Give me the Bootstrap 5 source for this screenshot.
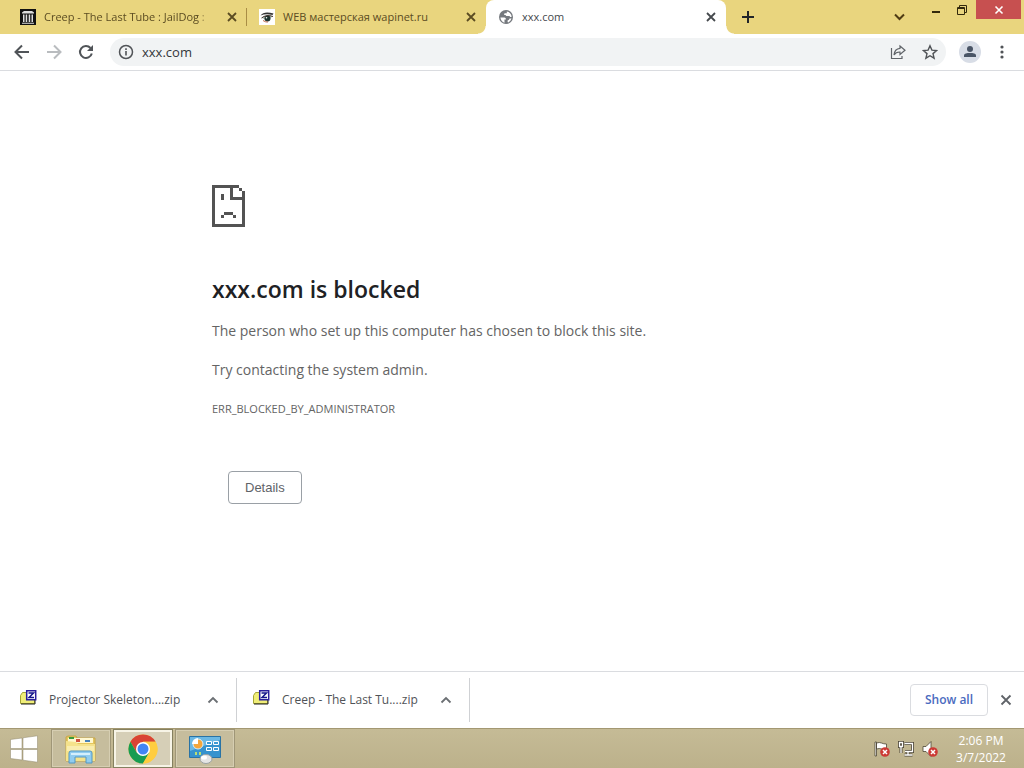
<!DOCTYPE html>
<html lang="en">
<head>
<meta charset="utf-8">
<meta name="viewport" content="width=device-width, initial-scale=1">
<title>xxx.com</title>
<link href="https://cdn.jsdelivr.net/npm/bootstrap@5.3.0/dist/css/bootstrap.min.css" rel="stylesheet">
<style>
body{font-family:"Open Sans","Noto Sans",sans-serif;font-size:12px;line-height:16px;color:#3c4043;background:#fff}
svg{display:block;flex:none}
button{font-family:inherit}
.plain{background:none;border:0;padding:0;color:inherit;display:flex;align-items:center;justify-content:center;flex:none}
.tabstrip{background:#e9d57e;height:34px;color:#5b4c22}
.tab{flex:0 1 239px;min-width:0;height:34px;padding:0 7px 0 12px}
.tab a{color:inherit;font-size:11px;min-width:0;overflow:hidden;white-space:nowrap;height:34px}
.tab .fade-end{-webkit-mask-image:linear-gradient(90deg,#000 96%,rgba(0,0,0,.4));mask-image:linear-gradient(90deg,#000 96%,rgba(0,0,0,.4))}
.tab.split{border-right:1px solid #a98d45;height:18px;padding-right:6px}
.tab.current{flex-basis:240px;background:#fff;color:#45494d;border-radius:8px 8px 0 0;position:relative}
.tab.current::before,.tab.current::after{content:"";position:absolute;bottom:0;width:8px;height:8px}
.tab.current::before{right:100%;background:radial-gradient(circle at 0 0,transparent 7px,#fff 8px)}
.tab.current::after{left:100%;background:radial-gradient(circle at 100% 0,transparent 7px,#fff 8px)}
.winbtn{width:26px;height:19px;color:#33290c}
.winclose{width:45px;background:#c75050;color:#fff;margin-right:3px}
.toolbar{height:37px;border-bottom:1px solid #dadce0;padding:0 17px 0 12px}
.navbtn{width:20px;height:20px;color:#505458}
.omni{background:#f1f3f4;border-radius:14px;height:28px;padding:0 8px;margin-left:14px}
.omni input{font-size:13px;line-height:20px;border:0;background:none;color:#33373b;outline:0;min-width:0;padding:0}
.avatar{width:22px;height:22px;border-radius:50%;background:#d8dde6;margin-left:13px}
.message{max-width:600px;width:100%;color:#646464;font-size:14px;line-height:24px;padding-top:114px}
.message h1{font-size:23px;line-height:28px;font-weight:600;color:#202124;margin:48px 0 16px}
.message p{margin:0 0 15px}
.message .code{font-size:11px}
.details{font:13px/20px "Liberation Sans",sans-serif;color:#5f6368;background:#fff;border:1px solid #9aa0a6;border-radius:4px;padding:6px 16px 5px;margin:35px 0 0 16px}
.shelf{border-top:1px solid #dadce0;height:57px;font-size:12px;color:#505357}
.dl{border-right:1px solid #cfd1d4;height:44px;width:233px;padding:0 15px 0 16px}
.dl a{color:inherit}
.dl:first-child{width:237px;padding-left:20px}
.showall{font-size:12px;font-weight:600;color:#4a6bc0;background:#fff;border:1px solid #dadce0;border-radius:4px;height:32px;width:78px}
.taskbar{height:40px;background:linear-gradient(#c5bb96,#bcb18b);border-top:1px solid #a39872}
.tasks{gap:2px}
.task{width:60px;height:39px;border:1px solid #9f9677;box-shadow:inset 0 0 0 1px #d6ceb2;background:#c6bd9d}
.task.on{border-color:#85805f;box-shadow:inset 0 0 0 2px #f7f4e6;background:#d6cfb7}
.start{width:51px;height:39px;padding-right:4px}
.clock{color:#fff;font-size:12px;line-height:17px;width:70px;margin-right:8px}
</style>
</head>
<body>
<div class="d-flex flex-column vh-100 overflow-hidden">
<header>
<div class="tabstrip d-flex align-items-center ps-2">
  <div class="tab split d-flex align-items-center">
    <a href="#" class="d-flex align-items-center gap-2 flex-grow-1 text-decoration-none">
      <svg width="16" height="16" viewBox="0 0 16 16"><path fill="#111" d="M0 0h16v16H0z"/><path fill="#ddd" d="M2 3.500L4 2h8l2 1.500V4.500H2zM3 5.500h1.500V13H3zM5.700 5.500h1.500V13H5.700zM8.700 5.500h1.500V13H8.700zM11.500 5.500H13V13h-1.500zM2 13.700h12v1H2z"/></svg>
      <span class="fade-end">Creep - The Last Tube : JailDog :</span></a>
    <button class="plain ms-1" aria-label="Close tab"><svg width="16" height="16" viewBox="0 0 16 16" stroke="currentColor" stroke-width="1.800"><path d="M4 4l8 8M12 4l-8 8"/></svg></button>
  </div>
  <div class="tab d-flex align-items-center">
    <a href="#" class="d-flex align-items-center gap-2 flex-grow-1 text-decoration-none">
      <svg width="16" height="16" viewBox="0 0 16 16"><path fill="#fff" d="M0 0h16v16H0z"/><path d="M1.500 6.500Q5 1.500 14.500 4.500l-1 1.500Q7 4.500 1.500 6.500z" fill="#333"/><path d="M3 9Q7 5 13.500 7.500Q9 13 3 9z" fill="#b9c6bd"/><circle cx="8.500" cy="9.500" r="3" fill="#1d332f"/><path d="M2.500 9q5-4 11.500-1.500" stroke="#3b2b24" fill="none"/><path d="M4 11.500q3 2 5 1.500" stroke="#bd6b4d" fill="none"/><circle cx="7.500" cy="8.700" r=".8" fill="#fff"/></svg>
      <span>WEB мастерская wapinet.ru</span></a>
    <button class="plain ms-1" aria-label="Close tab"><svg width="16" height="16" viewBox="0 0 16 16" stroke="currentColor" stroke-width="1.800"><path d="M4 4l8 8M12 4l-8 8"/></svg></button>
  </div>
  <div class="tab current d-flex align-items-center">
    <a href="#" class="d-flex align-items-center gap-2 flex-grow-1 text-decoration-none">
      <svg width="16" height="16" viewBox="0 0 16 16"><circle cx="8" cy="8" r="7" fill="#75797e"/><path fill="#fff" d="M2.400 8.500h4q1.600.2 1.600 2H6.500v3.200Q2.800 12.500 2.400 8.500zM8.800 2.500Q12 3 13.300 6L13.600 8h-1.400Q12 7 11 7H8.500Q7.700 7 7.700 6H6.200V4.800Q6.200 4.300 7 4.300h1.800zM13.500 9.500Q12.700 12.500 10 13.400q-.8-1-.2-2.200 1.400.2 1.700-1.700z"/></svg>
      <span>xxx.com</span></a>
    <button class="plain ms-1" aria-label="Close tab"><svg width="16" height="16" viewBox="0 0 16 16" stroke="currentColor" stroke-width="1.800"><path d="M4 4l8 8M12 4l-8 8"/></svg></button>
  </div>
  <button class="plain text-dark px-1 ms-2" aria-label="New tab"><svg width="20" height="16" viewBox="0 0 20 16" stroke="currentColor" stroke-width="2"><path d="M10 2v12M4 8h12"/></svg></button>
  <div class="d-flex ms-auto align-self-stretch">
    <button class="plain me-3" aria-label="Search tabs"><svg width="16" height="16" viewBox="0 0 16 16" fill="none" stroke="#4f3c14" stroke-width="2"><path d="M3 5.500l4.500 4.500L12 5.500"/></svg></button>
    <button class="plain winbtn" aria-label="Minimize"><svg width="10" height="10" viewBox="0 0 10 10"><path fill="currentColor" d="M0 6h8v2H0z"/></svg></button>
    <button class="plain winbtn" aria-label="Restore"><svg width="12" height="12" viewBox="0 0 12 12" fill="none" stroke="currentColor"><path d="M.5 3.500h7v7h-7zM0 4.500h8M2.500 3V1.500h7v7H8"/></svg></button>
    <button class="plain winbtn winclose" aria-label="Close"><svg width="10" height="10" viewBox="0 0 10 10" stroke="currentColor" stroke-width="1.600"><path d="M1.500 1.500l7 7M8.500 1.500l-7 7"/></svg></button>
  </div>
</div>
<div class="toolbar d-flex align-items-center">
  <div class="d-flex gap-2">
  <button class="plain navbtn me-1" aria-label="Back"><svg width="20" height="20" viewBox="0 0 20 20" fill="none" stroke="currentColor" stroke-width="2"><path d="M17 10H4M10 3.500L3.500 10l6.500 6.500"/></svg></button>
  <button class="plain navbtn me-1" aria-label="Forward"><svg width="20" height="20" viewBox="0 0 20 20" fill="none" stroke="#b9bcbf" stroke-width="2"><path d="M3 10h13M10 3.500l6.500 6.500-6.500 6.500"/></svg></button>
  <button class="plain navbtn" aria-label="Reload"><svg width="20" height="20" viewBox="0 0 20 20"><path fill="none" stroke="currentColor" stroke-width="2" d="M15.800 11.500A6 6 0 1 1 14.500 6"/><path fill="currentColor" d="M17 3v6h-6z"/></svg></button>
  </div>
  <div class="omni d-flex align-items-center flex-grow-1">
    <svg width="16" height="16" viewBox="0 0 16 16"><circle cx="8" cy="8" r="6.500" fill="none" stroke="#505357" stroke-width="1.500"/><path fill="#505357" d="M7.200 7h1.600v4.500H7.200zM7.200 4.300h1.600v1.600H7.200z"/></svg>
    <input class="flex-grow-1 ms-2" type="text" aria-label="Address" value="xxx.com">
    <button class="plain me-3" aria-label="Share"><svg width="16" height="16" viewBox="0 0 16 16" fill="none" stroke="#5f6368" stroke-width="1.200"><path d="M1.500 4v10.500H12V12M10 2l5 4.200-5 4.300V8Q6 7.800 4 11Q4.500 4.800 10 4.300z"/></svg></button>
    <button class="plain" aria-label="Bookmark"><svg width="16" height="16" viewBox="0 0 16 16" fill="none" stroke="#505357" stroke-width="1.400"><path d="M8 1.800l1.900 4.300 4.700.4-3.600 3.100 1.100 4.600L8 11.700l-4.100 2.500L5 9.600 1.400 6.500l4.700-.4z"/></svg></button>
  </div>
  <button class="plain avatar" aria-label="Profile"><svg width="14" height="14" viewBox="0 0 14 14" fill="#4a5566"><circle cx="7" cy="4" r="3"/><path d="M1 12v-1.500C1 8.500 4 8 7 8s6 .5 6 2.500V12z"/></svg></button>
  <button class="plain ms-3" aria-label="Menu"><svg width="10" height="16" viewBox="0 0 10 16" fill="#505357"><circle cx="5" cy="3" r="1.600"/><circle cx="5" cy="8" r="1.600"/><circle cx="5" cy="13" r="1.600"/></svg></button>
</div>
</header>
<main class="flex-grow-1 overflow-auto">
  <div class="message mx-auto">
    <svg width="33" height="42" viewBox="0 0 11 14" fill="#535353" shape-rendering="crispEdges"><path d="M0 0h9v1H7v3h4v1H6V1H1v12h9V5h1v9H0zM9 1h1v1H9zM10 2h1v3h-1zM3 3h1v2H3zM4 9h3v1H4zM3 10h1v1H3zM7 10h1v1H7z"/></svg>
    <h1>xxx.com is blocked</h1>
    <p>The person who set up this computer has chosen to block this site.</p>
    <p>Try contacting the system admin.</p>
    <p class="code">ERR_BLOCKED_BY_ADMINISTRATOR</p>
    <button class="details">Details</button>
  </div>
</main>
<footer>
<div class="shelf d-flex align-items-center">
  <div class="dl d-flex align-items-center">
    <svg width="17" height="20" viewBox="0 0 17 20"><path fill="#f0ee78" stroke="#a5a535" d="M.5 5.500l2-3h4v2h8v9H.5z"/><path stroke="#222" d="M1 14h14V9" fill="none"/><path fill="#fff" stroke="#2a1e9c" stroke-width="1.500" d="M6.700 .8h9v9h-9z"/><path fill="none" stroke="#15158a" stroke-width="1.500" d="M8.500 3h5L9 7.500h5"/></svg>
    <a href="#" class="text-decoration-none ms-2 ps-1 text-nowrap">Projector Skeleton....zip</a>
    <button class="plain ms-auto" aria-label="Download options"><svg width="16" height="16" viewBox="0 0 16 16" fill="none" stroke="#6b6f73" stroke-width="1.800"><path d="M3.500 10.500L8 6l4.500 4.500"/></svg></button>
  </div>
  <div class="dl d-flex align-items-center">
    <svg width="17" height="20" viewBox="0 0 17 20"><path fill="#f0ee78" stroke="#a5a535" d="M.5 5.500l2-3h4v2h8v9H.5z"/><path stroke="#222" d="M1 14h14V9" fill="none"/><path fill="#fff" stroke="#2a1e9c" stroke-width="1.500" d="M6.700 .8h9v9h-9z"/><path fill="none" stroke="#15158a" stroke-width="1.500" d="M8.500 3h5L9 7.500h5"/></svg>
    <a href="#" class="text-decoration-none ms-2 ps-1 text-nowrap">Creep - The Last Tu....zip</a>
    <button class="plain ms-auto" aria-label="Download options"><svg width="16" height="16" viewBox="0 0 16 16" fill="none" stroke="#6b6f73" stroke-width="1.800"><path d="M3.500 10.500L8 6l4.500 4.500"/></svg></button>
  </div>
  <button class="showall ms-auto p-0">Show all</button>
  <button class="plain mx-2 px-1" aria-label="Close downloads"><svg width="12" height="12" viewBox="0 0 12 12" stroke="#5f6368" stroke-width="1.800"><path d="M1.500 1.500l9 9M10.500 1.500l-9 9"/></svg></button>
</div>
<div class="taskbar d-flex align-items-center">
  <button class="plain start" aria-label="Start"><svg width="28" height="28" viewBox="0 0 28 28" fill="#fff" stroke="#8f876a" stroke-width=".5"><path d="M.5 4.500L12 3v10.500H.5zM13 2.800L27.500.8v12.700H13zM.5 14.500H12V25L.5 23.500zM13 14.500h14.500v12.700L13 25.200z"/></svg></button>
  <div class="tasks d-flex align-items-center">
  <button class="plain task" aria-label="File Explorer"><svg width="34" height="32" viewBox="0 0 34 32"><path fill="#e5c75e" stroke="#c6a64b" d="M2 4l2-1h8l1 2h18v23H2z"/><path fill="#fff8d0" d="M4 5h25v5H4z"/><path fill="#3a9a3a" d="M5 4h5v2H5z"/><path fill="#cf513d" d="M12 6h4v3h-4z"/><path fill="#4882ba" d="M21 7h5v2h-5z"/><path fill="#f5e28b" d="M2 8l10 1 2 2h17v17H2z"/><path fill="#f9edb0" d="M3 13h27v5H3z"/><path fill="#91ccef" stroke="#5397c3" d="M5 30V20q0-2 2-2h19q2 0 2 2v10h-6v-6H11v6z"/><path fill="#d4effc" d="M7 20h19v2H7z"/></svg></button>
  <button class="plain task on" aria-label="Chrome"><svg width="30" height="30" viewBox="0 0 30 30"><circle cx="15" cy="15" r="14.500" fill="#ffcd40"/><path fill="#d94335" d="M2.440 7.750A14.500 14.500 0 0 1 27.560 7.750H15L8.700 18.600z"/><path fill="#179c52" d="M2.440 7.750A14.500 14.500 0 0 0 15 29.500L21.300 18.600 8.700 18.600z"/><path fill="#ffcd40" d="M27.560 7.750H15V15l6.300 3.600L15 29.500A14.500 14.500 0 0 0 27.560 7.750z"/><circle cx="15" cy="15" r="7" fill="#fff"/><circle cx="15" cy="15" r="5.500" fill="#4285f4"/></svg></button>
  <button class="plain task" aria-label="Control Panel"><svg width="34" height="30" viewBox="0 0 34 30"><path fill="#3693ce" stroke="#2973a5" d="M1.500 2.500h31v21h-31z"/><path fill="#6bb8e4" d="M2 3h30v3L2 17z"/><circle cx="10" cy="10" r="5" fill="#f3a63c" stroke="#d7effa"/><path fill="#fff" d="M10 10V4a6 6 0 0 0-6 6z"/><path fill="#3f9bd4" stroke="#fff" d="M18.500 7.500h5v3h-5zM25.500 7.500h5v3h-5zM18.500 13.500h5v3h-5zM25.500 13.500h5v3h-5z"/><path fill="#b8df75" d="M7 18h2v3H7zM11 18h2v3h-2z"/><ellipse cx="18" cy="25" rx="6" ry="4.500" fill="#e5e5e5" stroke="#9aa1a3"/><ellipse cx="16" cy="23.500" rx="3" ry="2" fill="#fff"/></svg></button>
  </div>
  <div class="d-flex align-items-center ms-auto gap-2">
    <svg width="16" height="16" viewBox="0 0 16 16"><path fill="#fff" stroke="#4c4636" stroke-width=".8" d="M1 1h1.500v14H1zM2.500 2q3-1 5 0t5 1v6q-3 0-5-1t-5 0z"/><circle cx="11" cy="11" r="4.800" fill="#cc3a35"/><path stroke="#fff" stroke-width="1.500" d="M9 9l4 4M13 9l-4 4"/></svg>
    <svg width="16" height="16" viewBox="0 0 16 16" fill="none"><path stroke="#4c4636" stroke-width="3" d="M6.500 2.500h8v8H7M10 11v3M6.500 14h8M1.500 1.500h3v4h-3zM3 6v6"/><path stroke="#fff" stroke-width="1.300" d="M6.500 2.500h8v8H7M10 11v3M6.500 14h8M1.500 1.500h3v4h-3zM3 6v6"/></svg>
    <svg width="16" height="16" viewBox="0 0 16 16"><path fill="#fff" stroke="#4c4636" stroke-width=".8" d="M1 5.500h3l5-5v15l-5-5H1z"/><circle cx="11" cy="11" r="4.800" fill="#cc3a35"/><path stroke="#fff" stroke-width="1.500" d="M9 9l4 4M13 9l-4 4"/></svg>
    <div class="clock text-center"><div>2:06 PM</div><div>3/7/2022</div></div>
  </div>
</div>
</footer>
</div>
<script src="https://cdn.jsdelivr.net/npm/bootstrap@5.3.0/dist/js/bootstrap.bundle.min.js"></script>
</body>
</html>
